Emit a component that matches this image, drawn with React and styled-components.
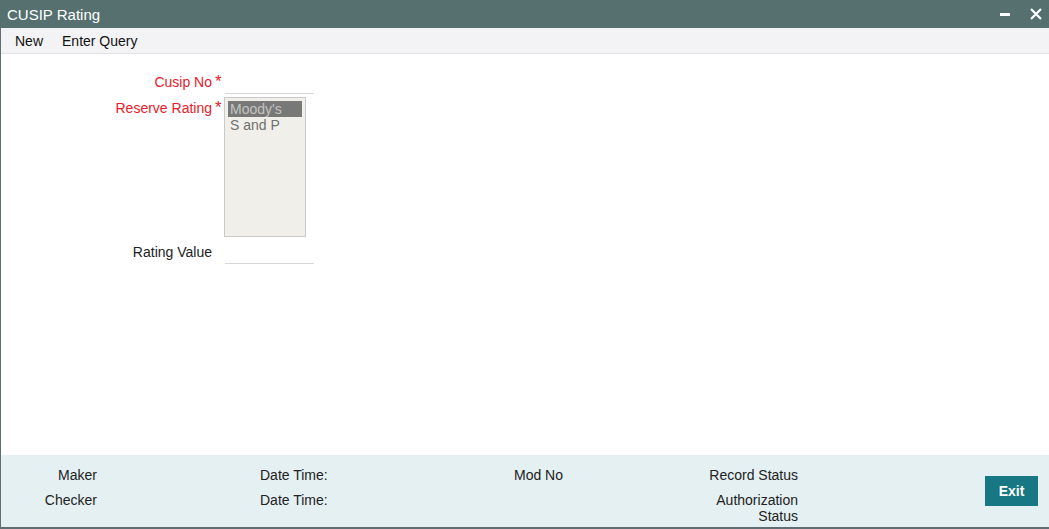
import styled, { createGlobalStyle } from "styled-components";

const Global = createGlobalStyle`
  html, body {
    margin: 0;
    padding: 0;
    background: #ffffff;
  }
  body {
    font-family: "Liberation Sans", Arial, sans-serif;
    font-size: 14px;
    color: #222;
  }
`;

export default function App() {
  return (
    <>
      <Global />
      <Window>
        <TitleBar>
          <span>CUSIP Rating</span>
          <WinControls>
            <svg width="10" height="12" viewBox="0 0 10 12">
              <rect x="0" y="5" width="10" height="3" fill="#fff" />
            </svg>
            <svg width="12" height="12" viewBox="0 0 12 12">
              <path d="M1 1 L11 11 M11 1 L1 11" stroke="#fff" strokeWidth="2.2" />
            </svg>
          </WinControls>
        </TitleBar>
        <Toolbar>
          <ToolItem>New</ToolItem>
          <ToolItem>Enter Query</ToolItem>
        </Toolbar>
        <Body>
          <FormRow>
            <Label $required>Cusip No</Label>
            <Star>*</Star>
            <TextInput />
          </FormRow>
          <FormRow $gap={3}>
            <Label $required $offset={2}>Reserve Rating</Label>
            <Star $offset={2}>*</Star>
            <ListBox>
              <Option $selected>Moody's</Option>
              <Option>S and P</Option>
            </ListBox>
          </FormRow>
          <FormRow>
            <Label>Rating Value</Label>
            <Star />
            <TextInput />
          </FormRow>
        </Body>
        <Footer>
          <FooterGrid>
            <FLabel $right>Maker</FLabel>
            <FLabel>Date Time:</FLabel>
            <FLabel>Mod No</FLabel>
            <FLabel $right>Record Status</FLabel>
            <FLabel $right>Checker</FLabel>
            <FLabel>Date Time:</FLabel>
            <FLabel />
            <FLabel $right>
              Authorization
              <br />
              Status
            </FLabel>
          </FooterGrid>
          <ExitButton>Exit</ExitButton>
        </Footer>
      </Window>
    </>
  );
}

const Window = styled.div`
  width: 1049px;
  height: 529px;
  display: flex;
  flex-direction: column;
  border-left: 1px solid #5e6e73;
  border-bottom: 2px solid #5e6e73;
  box-sizing: border-box;
`;

const TitleBar = styled.div`
  height: 28px;
  flex: none;
  background: #55706f;
  color: #ffffff;
  font-size: 15px;
  display: flex;
  align-items: center;
  justify-content: space-between;
  padding: 0 7px 0 7px;
  margin-left: -1px;
`;

const WinControls = styled.div`
  display: flex;
  align-items: center;
  gap: 20px;
  svg {
    display: block;
  }
`;

const Toolbar = styled.div`
  height: 25px;
  flex: none;
  background: #f3f3f5;
  border-bottom: 1px solid #e2e2e4;
  display: flex;
  align-items: center;
  padding-left: 14px;
  gap: 19px;
`;

const ToolItem = styled.span`
  color: #111;
  font-size: 14px;
`;

const Body = styled.div`
  flex: 1;
  padding-top: 19px;
  display: flex;
  flex-direction: column;
  gap: 3px;
`;

const FormRow = styled.div`
  display: flex;
  align-items: flex-start;
  margin-bottom: ${(p) => (p.$gap ? `${p.$gap}px` : "0")};
`;

const Label = styled.div`
  width: 211px;
  text-align: right;
  color: ${(p) => (p.$required ? "#e8202a" : "#222")};
  line-height: 18px;
  margin-top: ${(p) => (p.$offset ? `${p.$offset}px` : "0")};
`;

const Star = styled.span`
  width: 13px;
  color: #e8202a;
  font-size: 17px;
  line-height: 18px;
  padding-left: 3px;
  margin-top: ${(p) => (p.$offset ? `${p.$offset}px` : "0")};
  box-sizing: border-box;
`;

const TextInput = styled.div`
  width: 89px;
  height: 20px;
  border-bottom: 1px solid #d6d6d6;
`;

const ListBox = styled.div`
  width: 74px;
  height: 132px;
  margin-left: -1px;
  background: #f0efea;
  border: 1px solid #c9c9c9;
  padding: 3px;
  display: flex;
  flex-direction: column;
`;

const Option = styled.div`
  height: 16px;
  line-height: 16px;
  padding-left: 2px;
  background: ${(p) => (p.$selected ? "#787878" : "transparent")};
  color: ${(p) => (p.$selected ? "#c4c4c4" : "#707070")};
`;

const Footer = styled.div`
  height: 72px;
  flex: none;
  background: #e4f0f2;
  display: flex;
  align-items: center;
  justify-content: space-between;
  padding-right: 11px;
`;

const FooterGrid = styled.div`
  display: grid;
  grid-template-columns: 96px 253px 283px 165px;
  row-gap: 9px;
  align-self: flex-start;
  padding-top: 12px;
  & > :nth-child(2),
  & > :nth-child(6) {
    padding-left: 163px;
  }
  & > :nth-child(3) {
    padding-left: 164px;
  }
`;

const FLabel = styled.div`
  color: #222;
  line-height: 16px;
  text-align: ${(p) => (p.$right ? "right" : "left")};
  white-space: nowrap;
`;

const ExitButton = styled.button`
  width: 53px;
  height: 30px;
  background: #177782;
  color: #ffffff;
  font-family: "Liberation Sans", Arial, sans-serif;
  font-weight: bold;
  font-size: 14px;
  border: none;
  margin-top: 0;
`;
